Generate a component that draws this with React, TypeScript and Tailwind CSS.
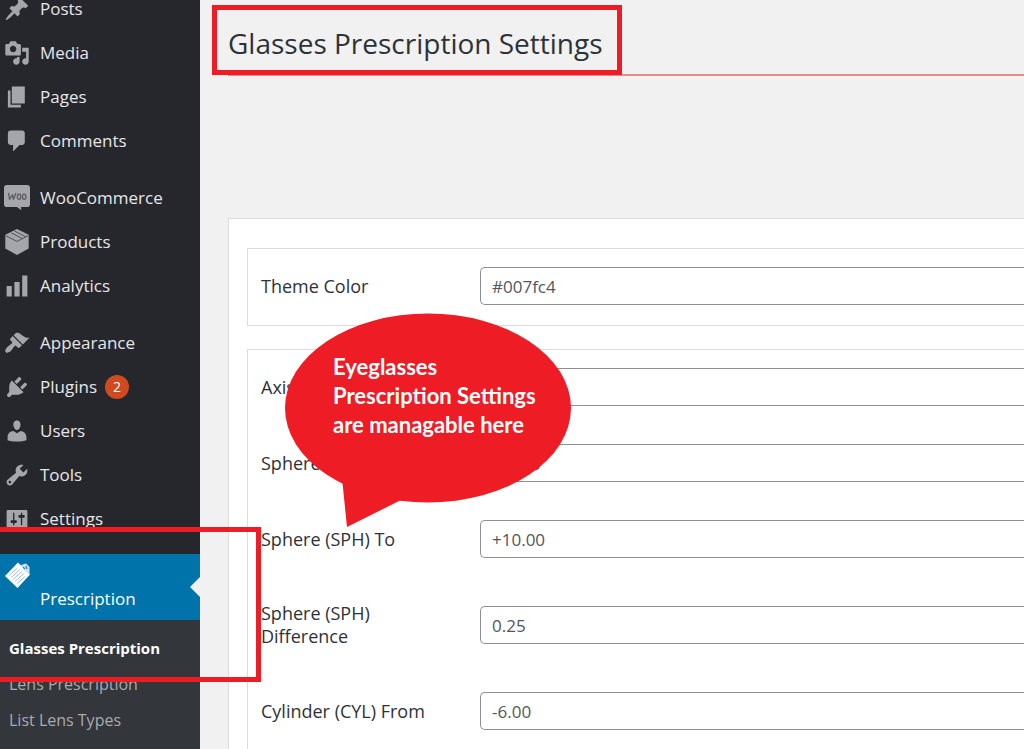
import type { ReactNode } from 'react'

interface MenuItem {
    label: string
    icon: ReactNode
    badge?: number
}

interface Field {
    id: string
    label: string
    value: string
}

const path = (d: string) => <path fillRule="evenodd" d={d} />

const menuGroups: MenuItem[][] = [
    [
        {
            label: 'Posts',
            icon: path('M10.44 3.02l1.82-1.82 6.36 6.35-1.83 1.82c-1.05-.68-2.48-.57-3.41.36l-.75.75c-.92.93-1.04 2.35-.35 3.41l-1.83 1.82-2.41-2.41-2.8 2.79c-.42.42-3.38 2.71-3.8 2.29s1.86-3.39 2.28-3.81l2.79-2.79L4.1 9.36l1.83-1.82c1.05.69 2.48.57 3.4-.36l.75-.75c.93-.92 1.05-2.35.36-3.41z'),
        },
        {
            label: 'Media',
            icon: path('M13 11V4c0-.55-.45-1-1-1h-1.67L9 1H5L3.67 3H2c-.55 0-1 .45-1 1v7c0 .55.45 1 1 1h10c.55 0 1-.45 1-1zM7 4.5c1.38 0 2.5 1.12 2.5 2.5S8.38 9.5 7 9.5 4.5 8.38 4.5 7 5.62 4.5 7 4.5zM14 6h5v10.5c0 1.38-1.12 2.5-2.5 2.5S14 17.88 14 16.5s1.12-2.5 2.5-2.5c.17 0 .34.02.5.05V9h-3V6zm-4 8.05V13h2v3.5c0 1.38-1.12 2.5-2.5 2.5S7 17.88 7 16.5 8.12 14 9.5 14c.17 0 .34.02.5.05z'),
        },
        { label: 'Pages', icon: path('M6 15V2h10v13H6zm-1 1h8v2H3V5h2v11z') },
        {
            label: 'Comments',
            icon: path('M5 2h9c1.1 0 2 .9 2 2v7c0 1.1-.9 2-2 2h-2l-5 5v-5H5c-1.1 0-2-.9-2-2V4c0-1.1.9-2 2-2z'),
        },
    ],
    [
        {
            label: 'WooCommerce',
            icon: (
                <>
                    <path d="M2 0h16c1.1 0 2 .9 2 2v13c0 1.1-.9 2-2 2h-5l.3 2.5-3.3-2.5H2c-1.1 0-2-.9-2-2V2C0 .9.9 0 2 0z" />
                    <g fill="none" stroke="#5c5c62" strokeWidth="1" strokeLinecap="round" strokeLinejoin="round">
                        <path d="M3.5 6.5l.8 4.5L6.5 7.5l.8 3.5L9 6.5" />
                        <ellipse cx="11.6" cy="9" rx="1.3" ry="2" />
                        <ellipse cx="15.5" cy="9" rx="1.3" ry="2" />
                    </g>
                </>
            ),
        },
        {
            label: 'Products',
            icon: (
                <>
                    <path d="M10 0l9 4.5V15l-9 5-9-5V4.5z" />
                    <path d="M1.5 5.2L10 9.6l8.5-4.4M5.5 2.9l8.8 4.5M8 1.5L16.600 6" fill="none" stroke="#4a4a50" strokeWidth=".7" />
                </>
            ),
        },
        { label: 'Analytics', icon: path('M18 18V2h-4v16h4zm-6 0V7H8v11h4zm-6 0v-8H2v8h4z') },
    ],
    [
        {
            label: 'Appearance',
            icon: path('M14.48 11.06L7.41 3.99l1.5-1.5c.5-.56 2.3-.47 3.51.32 1.21.8 1.43 1.28 2.91 2.1 1.18.64 2.45 1.26 4.45.85zm-.71.71L6.7 4.7 4.93 6.47c-.39.39-.39 1.02 0 1.41l1.06 1.06c.39.39.39 1.03 0 1.42-.6.6-1.43 1.11-2.21 1.69-.35.26-.7.53-1.01.84C1.43 14.23.4 16.08 1.4 17.07c.99 1 2.84-.03 4.18-1.36.31-.31.58-.66.85-1.02.57-.78 1.08-1.61 1.69-2.21.39-.39 1.02-.39 1.41 0l1.06 1.06c.39.39 1.02.39 1.41 0z'),
        },
        {
            label: 'Plugins',
            badge: 2,
            icon: path('M13.11 4.36L9.87 7.6 8 5.73l3.24-3.24c.35-.34 1.05-.2 1.56.32.52.51.66 1.21.31 1.55zm-8 1.77l.91-1.12 9.01 9.01-1.19.84c-.71.71-2.63 1.16-3.82 1.16H6.14L4.9 17.26c-.59.59-1.54.59-2.12 0-.59-.58-.59-1.53 0-2.12l1.24-1.24v-3.88c0-1.13.4-3.19 1.09-3.89zm7.26 3.97l3.24-3.24c.34-.35 1.04-.21 1.55.31.52.51.66 1.21.31 1.55l-3.24 3.25z'),
        },
        {
            label: 'Users',
            icon: path('M10 9.25c-2.27 0-2.73-3.44-2.73-3.44C7 4.02 7.82 2 9.97 2c2.16 0 2.98 2.02 2.71 3.81 0 0-.41 3.44-2.68 3.44zm0 2.57L12.72 10c2.39 0 4.52 2.33 4.52 4.53v2.49s-3.65 1.13-7.24 1.13c-3.65 0-7.24-1.13-7.24-1.13v-2.49c0-2.25 1.94-4.48 4.47-4.48z'),
        },
        {
            label: 'Tools',
            icon: path('M16.68 9.77c-1.34 1.34-3.3 1.67-4.95.99l-5.41 6.52c-.99.99-2.59.99-3.58 0s-.99-2.59 0-3.57l6.52-5.42c-.68-1.65-.35-3.61.99-4.95 1.28-1.28 3.12-1.62 4.72-1.06l-2.89 2.89 2.82 2.82 2.86-2.87c.53 1.58.18 3.39-1.08 4.65zM3.81 16.21c.4.39 1.04.39 1.43 0 .4-.4.4-1.04 0-1.43-.39-.4-1.03-.4-1.43 0-.39.39-.39 1.03 0 1.43z'),
        },
        {
            label: 'Settings',
            icon: path('M18 16V4c0-.55-.45-1-1-1H3c-.55 0-1 .45-1 1v12c0 .55.45 1 1 1h14c.55 0 1-.45 1-1zM8 11h1c.55 0 1 .45 1 1s-.45 1-1 1H8v1.5c0 .28-.22.5-.5.5s-.5-.22-.5-.5V13H6c-.55 0-1-.45-1-1s.45-1 1-1h1V5.5c0-.28.22-.5.5-.5s.5.22.5.5V11zm5-2h-1c-.55 0-1-.45-1-1s.45-1 1-1h1V5.5c0-.28.22-.5.5-.5s.5.22.5.5V7h1c.55 0 1 .45 1 1s-.45 1-1 1h-1v5.5c0 .28-.22.5-.5.5s-.5-.22-.5-.5V9z'),
        },
    ],
]

const submenu = ['Glasses Prescription', 'Lens Prescription', 'List Lens Types', 'Add Lens Type']

const themeFields: Field[] = [{ id: 'theme-color', label: 'Theme Color', value: '#007fc4' }]

const lensFields: Field[] = [
    { id: 'axis', label: 'Axis', value: '' },
    { id: 'sph-from', label: 'Sphere (SPH) From', value: '-10.00' },
    { id: 'sph-to', label: 'Sphere (SPH) To', value: '+10.00' },
    { id: 'sph-diff', label: 'Sphere (SPH) Difference', value: '0.25' },
    { id: 'cyl-from', label: 'Cylinder (CYL) From', value: '-6.00' },
]

function PrescriptionIcon() {
    return (
        <svg viewBox="0 0 26 26" className="size-[26px]">
            <path d="M14 .5l12 12L13.500 26 1 14z" fill="#fff" />
            <path d="M17 3l5-1.500L25.500 5v7L21 9.500z" fill="#cfe3f2" />
            <path d="M19 5l2 2M22 4l1 3" stroke="#2f84bb" strokeWidth="1.2" />
            <path
                d="M5 13.500l8-7M7 15.500l9-8M9 17.500l9-8M11 19.500l9-8M13 21.500l8-7"
                stroke="#7fb3d6"
                strokeWidth=".8"
            />
        </svg>
    )
}

function Sidebar() {
    return (
        <nav className="-mt-[13px] w-[200px] shrink-0 bg-[#26272d] text-[17px] text-[#e6e6e8]">
            {menuGroups.map((group, i) => (
                <ul key={i} className="mb-[13px]">
                    {group.map((item) => (
                        <li key={item.label}>
                            <a href="#" className="flex h-11 items-center pl-1">
                                <svg viewBox="0 0 20 20" className="mr-[10px] size-[26px] fill-[#a5a6aa]">
                                    {item.icon}
                                </svg>
                                {item.label}
                                {item.badge && (
                                    <span className="ml-2 flex size-6 items-center justify-center rounded-full bg-[#d04a20] text-sm text-white">
                                        {item.badge}
                                    </span>
                                )}
                            </a>
                        </li>
                    ))}
                </ul>
            ))}

            <a href="#" className="relative flex h-[66px] bg-[#0073aa] pl-1 text-white">
                <span className="mt-2 mr-[10px]">
                    <PrescriptionIcon />
                </span>
                <span className="mt-8">Prescription</span>
                <span className="absolute top-[23px] right-0 border-y-10 border-r-10 border-y-transparent border-r-[#f1f1f1]" />
            </a>
            <ul className="bg-[#33363b] pt-[10px] text-base text-[#a9abae]">
                {submenu.map((label, i) => (
                    <li key={label}>
                        <a
                            href="#"
                            className={i === 0 ? 'flex h-9 items-center pl-[9px] text-[15px] font-bold text-white' : 'flex h-9 items-center pl-[9px]'}
                        >
                            {label}
                        </a>
                    </li>
                ))}
            </ul>
        </nav>
    )
}

function FieldGroup({ fields }: { fields: Field[] }) {
    return (
        <div className="border border-r-0 border-[#dcdcde]">
            {fields.map((field) => (
                <div key={field.id} className="flex items-center pt-[18px] pb-5 pl-[13px]">
                    <label htmlFor={field.id} className="my-[6px] w-[219px] shrink-0 pr-9 text-lg leading-[23px] font-medium text-[#2c3338]">
                        {field.label}
                    </label>
                    <input
                        id={field.id}
                        type="text"
                        defaultValue={field.value}
                        className="h-[38px] min-w-0 flex-1 rounded-l-[5px] border border-r-0 border-[#8c8f94] bg-white px-[11px] text-[17px] text-[#50575e]"
                    />
                </div>
            ))}
        </div>
    )
}

function Callout() {
    return (
        <div className="absolute top-[313px] left-[285px] h-[215px] w-[287px]">
            <svg viewBox="0 0 287 215" className="absolute inset-0 size-full fill-[#ee1c25]">
                <ellipse cx="143" cy="95" rx="143" ry="94.5" />
                <path d="M57 165l5 49 56-28z" />
            </svg>
            <p className="relative pt-[39px] pl-12 font-['Lato','Open_Sans',sans-serif] text-[22px] leading-[29px] font-bold whitespace-nowrap text-white">
                Eyeglasses
                <br />
                Prescription Settings
                <br />
                are managable here
            </p>
        </div>
    )
}

export default function App() {
    return (
        <div className="relative flex h-screen overflow-hidden bg-[#f1f1f1] font-['Open_Sans','Noto_Sans',sans-serif]">
            <Sidebar />
            <main className="min-w-0 flex-1">
                <header className="ml-7 h-[76px] border-b-2 border-[#e88a8c]">
                    <h1 className="pt-[23px] text-[28px] leading-10 text-[#2c3338]">Glasses Prescription Settings</h1>
                </header>
                <form className="mt-[142px] ml-7 flex flex-col gap-[23px] border-t border-l border-[#dcdcde] bg-white pt-[29px] pb-6 pl-[18px]">
                    <FieldGroup fields={themeFields} />
                    <FieldGroup fields={lensFields} />
                </form>
            </main>

            {/* Annotations drawn over the page */}
            <div className="absolute top-[5px] left-[212px] h-[70px] w-[410px] border-5 border-[#ee1c25]" />
            <div className="absolute top-[527px] -left-[5px] h-[155px] w-[266px] border-5 border-[#ee1c25]" />
            <Callout />
        </div>
    )
}
